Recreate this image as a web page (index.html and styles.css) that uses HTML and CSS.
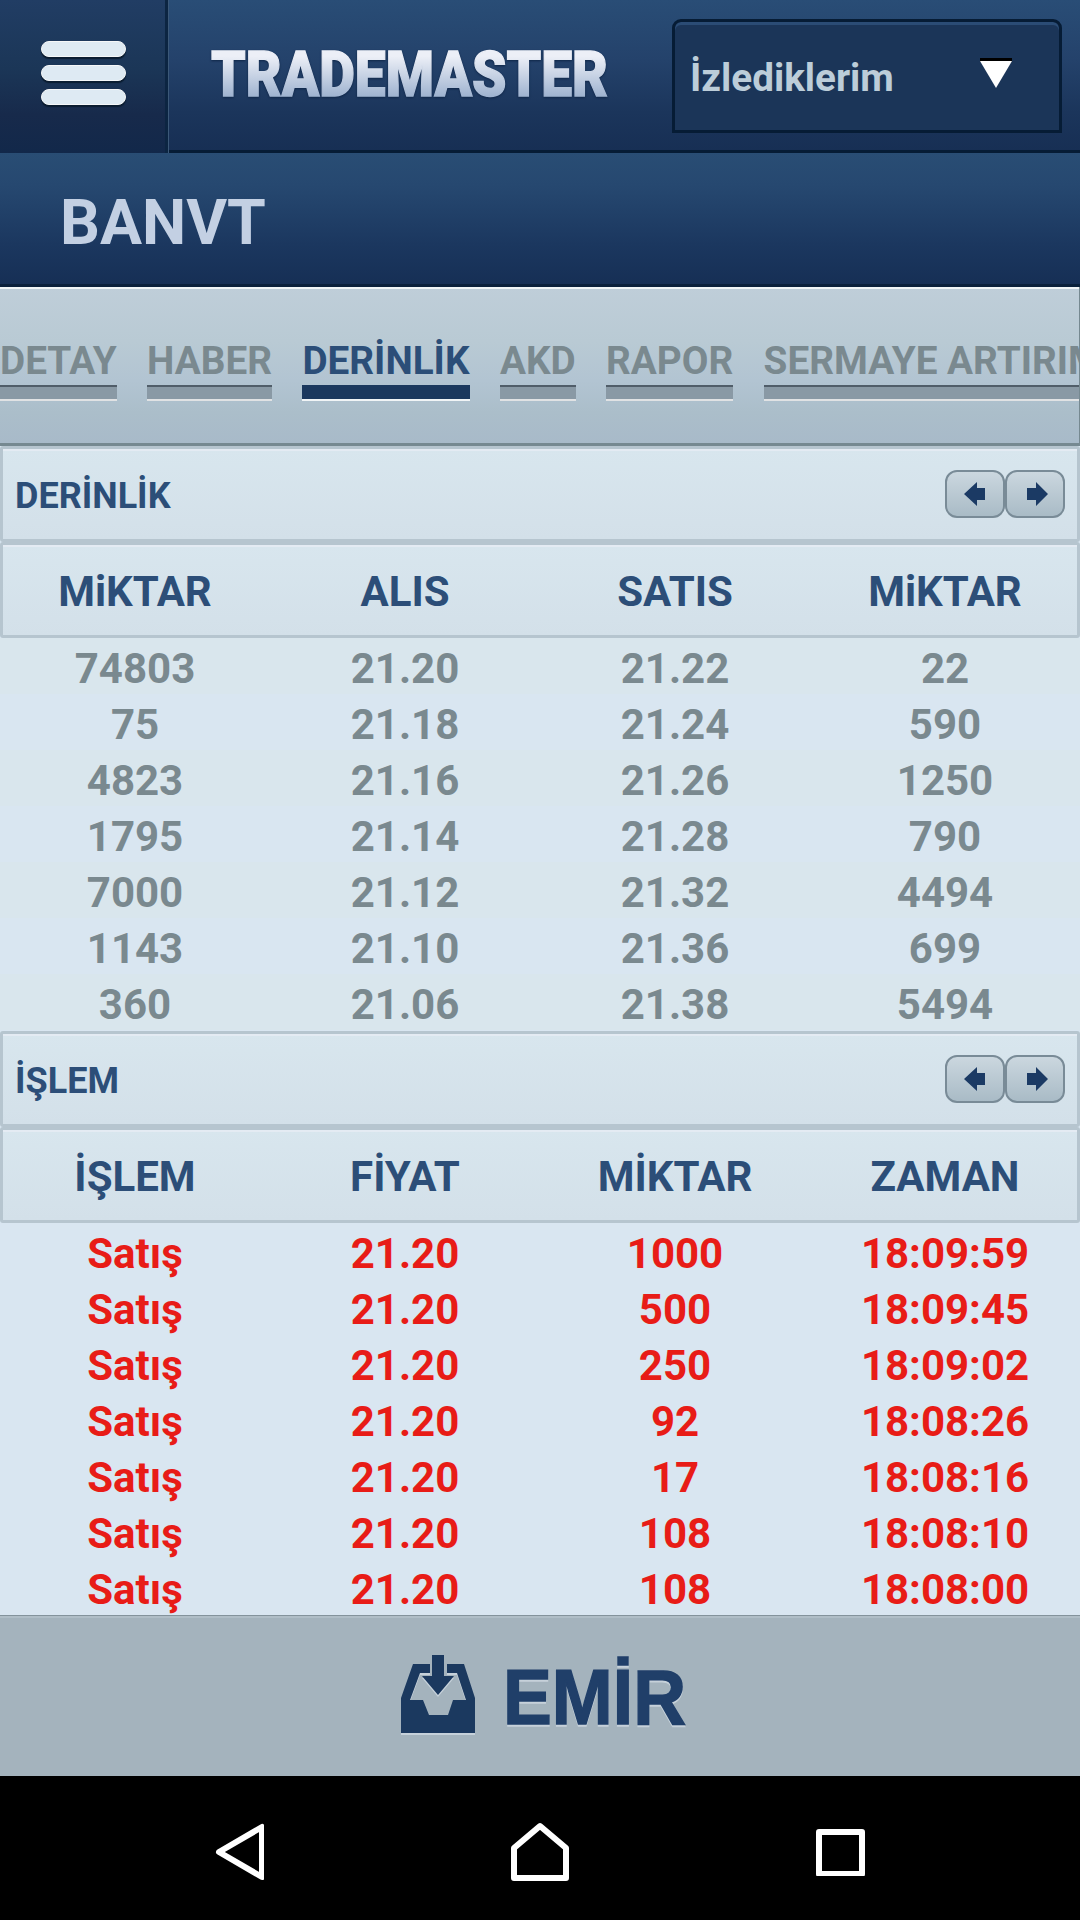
FILE: index.html
```html
<!DOCTYPE html>
<html lang="tr">
<head>
    <meta charset="UTF-8">
    <meta name="viewport" content="width=device-width, initial-scale=1.0">
    <title>TradeMaster - BANVT</title>
    <link rel="stylesheet" href="styles.css">
</head>
<body>

<header class="header">
    <button class="menu-button">
        <span class="bar"></span>
        <span class="bar"></span>
        <span class="bar"></span>
    </button>
    <svg class="brand" width="410" height="80" viewBox="0 0 410 80">
        <defs>
            <linearGradient id="brand-fill" x1="0" y1="0" x2="0" y2="1">
                <stop offset="0.25" stop-color="#eceff7"/>
                <stop offset="0.8" stop-color="#9fb3d0"/>
            </linearGradient>
        </defs>
        <text x="4" y="64" textLength="397" lengthAdjust="spacingAndGlyphs" fill="url(#brand-fill)" stroke="url(#brand-fill)">TRADEMASTER</text>
    </svg>
    <div class="list-select">
        <span>İzlediklerim</span>
        <svg width="32" height="30" viewBox="0 0 32 30">
            <rect width="32" height="4" fill="#000"/>
            <path d="M0 3h32L16 30z" fill="#fff"/>
        </svg>
    </div>
</header>

<div class="symbol-bar">
    <h1>BANVT</h1>
</div>

<nav class="tabs">
    <a class="tab">DETAY</a>
    <a class="tab">HABER</a>
    <a class="tab active">DERİNLİK</a>
    <a class="tab">AKD</a>
    <a class="tab">RAPOR</a>
    <a class="tab">SERMAYE ARTIRIM</a>
</nav>

<main class="content">
    <section>
        <div class="panel panel-title">
            <h2>DERİNLİK</h2>
            <div class="arrows">
                <button class="arrow"><svg width="22" height="24" viewBox="0 0 22 24"><path d="M0 12L13 0v6h8v12h-8v6z"/></svg></button>
                <button class="arrow next"><svg width="22" height="24" viewBox="0 0 22 24"><path d="M22 12L10 0v6H1v12h9v6z"/></svg></button>
            </div>
        </div>
        <div class="panel columns">
            <span>MiKTAR</span><span>ALIS</span><span>SATIS</span><span>MiKTAR</span>
        </div>
        <div class="rows depth">
            <div class="row"><span>74803</span><span>21.20</span><span>21.22</span><span>22</span></div>
            <div class="row"><span>75</span><span>21.18</span><span>21.24</span><span>590</span></div>
            <div class="row"><span>4823</span><span>21.16</span><span>21.26</span><span>1250</span></div>
            <div class="row"><span>1795</span><span>21.14</span><span>21.28</span><span>790</span></div>
            <div class="row"><span>7000</span><span>21.12</span><span>21.32</span><span>4494</span></div>
            <div class="row"><span>1143</span><span>21.10</span><span>21.36</span><span>699</span></div>
            <div class="row"><span>360</span><span>21.06</span><span>21.38</span><span>5494</span></div>
        </div>
    </section>

    <section>
        <div class="panel panel-title">
            <h2>İŞLEM</h2>
            <div class="arrows">
                <button class="arrow"><svg width="22" height="24" viewBox="0 0 22 24"><path d="M0 12L13 0v6h8v12h-8v6z"/></svg></button>
                <button class="arrow next"><svg width="22" height="24" viewBox="0 0 22 24"><path d="M22 12L10 0v6H1v12h9v6z"/></svg></button>
            </div>
        </div>
        <div class="panel columns">
            <span>İŞLEM</span><span>FİYAT</span><span>MİKTAR</span><span>ZAMAN</span>
        </div>
        <div class="rows trades">
            <div class="row"><span>Satış</span><span>21.20</span><span>1000</span><span>18:09:59</span></div>
            <div class="row"><span>Satış</span><span>21.20</span><span>500</span><span>18:09:45</span></div>
            <div class="row"><span>Satış</span><span>21.20</span><span>250</span><span>18:09:02</span></div>
            <div class="row"><span>Satış</span><span>21.20</span><span>92</span><span>18:08:26</span></div>
            <div class="row"><span>Satış</span><span>21.20</span><span>17</span><span>18:08:16</span></div>
            <div class="row"><span>Satış</span><span>21.20</span><span>108</span><span>18:08:10</span></div>
            <div class="row"><span>Satış</span><span>21.20</span><span>108</span><span>18:08:00</span></div>
        </div>
    </section>
</main>

<footer class="order-bar">
    <svg class="order-icon" width="74" height="78" viewBox="0 0 74 78">
        <path fill-rule="evenodd" d="M12 9h17v9H19L9 45h13l6 15h19l5-15h13L56 18H46V9h17l11 34v35H0V43z"/>
        <path d="M31 0h12v21h10L37 40 21 21h10z"/>
    </svg>
    <svg class="order-label" width="184" height="84" viewBox="0 0 184 84">
        <text x="0" y="70" textLength="183" lengthAdjust="spacingAndGlyphs">EMİR</text>
    </svg>
</footer>

<div class="system-nav">
    <svg width="50" height="58" viewBox="0 0 50 58"><path d="M48 4v50L5 29z"/></svg>
    <svg width="58" height="60" viewBox="0 0 58 60"><path d="M3 26L29 4l26 22v30H3z"/></svg>
    <svg width="50" height="48" viewBox="0 0 50 48"><path d="M3 4h43v42H3z"/></svg>
</div>

</body>
</html>
```

FILE: styles.css
```css
* {
    box-sizing: border-box;
}

body {
    margin: 0;
    width: 1080px;
    height: 1920px;
    overflow: hidden;
    display: flex;
    flex-direction: column;
    font-family: Roboto, sans-serif;
    font-weight: bold;
    background-color: #d9e6f1;
}

h1, h2 {
    margin: 0;
}

button {
    border: none;
    padding: 0;
}

/* Top bar */
.header {
    height: 153px;
    display: flex;
    align-items: flex-start;
    background: linear-gradient(#294d76, #24426b 40%, #1b355b 75%, #172f54);
    border-bottom: 3px solid #061c35;
}

.menu-button {
    width: 169px;
    height: 153px;
    padding: 41px 43px 0 41px;
    display: flex;
    flex-direction: column;
    gap: 8px;
    background: linear-gradient(#213d64, #1b3657 45%, #172a4b 75%, #12284a);
    border-right: 1px solid #3b5878;
    box-shadow: inset -3px 0 #0c2542;
}

.bar {
    width: 85px;
    height: 16px;
    border-radius: 8px;
    background-color: #deeaf3;
    border: 1px solid #f5f7f8;
    box-shadow: 0 2px 1px #0a1c30;
}

.brand {
    margin: 32px 0 0 38px;
    overflow: visible;
}

.brand text {
    font-weight: 900;
    font-size: 63px;
    stroke-width: 1.4px;
    filter: drop-shadow(0 1px 1px #0e2547);
}

.list-select {
    width: 390px;
    height: 114px;
    margin: 19px 18px 0 auto;
    padding: 0 47px 0 15px;
    display: flex;
    align-items: center;
    justify-content: space-between;
    color: #bccdd9;
    font-size: 38.7px;
    background-color: #1b3558;
    border: 3px solid #061c35;
    border-radius: 9px 9px 0 0;
    box-shadow: inset 0 3px #2b4c75;
}

.list-select span {
    padding-top: 2px;
}

.list-select svg {
    margin-bottom: 6px;
}

.symbol-bar {
    height: 134px;
    padding: 33px 0 0 60px;
    background: linear-gradient(#294d74, #264870 25%, #1b375f 70%, #162f55);
    border-bottom: 3px solid #0a203b;
}

.symbol-bar h1 {
    color: #c3d0e3;
    font-size: 62.6px;
    line-height: 74px;
}

/* Tabs */
.tabs {
    height: 159px;
    padding-top: 51px;
    display: flex;
    align-items: flex-start;
    gap: 30.4px;
    overflow: hidden;
    background: linear-gradient(#bfced9, #b9cad4 35%, #b2c4d2 60%, #abbeca 80%, #a8bac9);
    border-bottom: 3px solid #768991;
    border-right: 1px solid #768991;
    box-shadow: inset 0 2px #f0f4f6;
}

.tab {
    flex: none;
    color: #7a898f;
    font-size: 38.7px;
    line-height: 45px;
    white-space: nowrap;
}

.tab::after {
    content: "";
    display: block;
    height: 12px;
    margin-top: 2px;
    background-color: #8999a5;
    border-top: 2px solid #505d69;
    border-bottom: 2px solid #e0e2e4;
}

.tab.active {
    color: #2c4e78;
}

.tab.active::after {
    background-color: #1b385e;
    border-top-color: #1b385e;
    border-bottom-color: #f0f4f6;
}

/* Depth and trades tables */
.content {
    height: 1169px;
    overflow: hidden;
}

.content section {
    height: 585px;
}

.panel {
    height: 96px;
    color: #2c4e78;
    background: linear-gradient(#d8e6ee, #d3e0e9);
    border: 3px solid #b6c5cf;
    border-radius: 3px;
    box-shadow: inset 0 2px #e4ebf3;
}

.panel-title {
    padding: 0 12px;
    display: flex;
    align-items: center;
    justify-content: space-between;
}

.panel-title h2 {
    font-size: 36px;
    line-height: 42px;
    padding-top: 3px;
}

.arrows {
    display: flex;
}

.arrow {
    width: 60px;
    height: 48px;
    display: flex;
    align-items: center;
    justify-content: center;
    background: linear-gradient(#cbd7df, #a9bbc6);
    border: 2px solid #798b97;
    border-radius: 12px;
}

.arrow.next {
    padding-left: 3px;
}

.arrow path {
    fill: #1b3a64;
}

.columns, .row {
    display: grid;
    grid-template-columns: repeat(4, 270px);
    justify-content: center;
    text-align: center;
    font-size: 42px;
}

.columns {
    line-height: 93px;
}

.row {
    height: 56px;
    line-height: 62px;
}

.depth {
    color: #7a898f;
}

.depth .row:nth-child(odd) {
    background-color: #d9e6ed;
}

.trades {
    color: #e81c17;
}

/* Order button */
.order-bar {
    height: 161px;
    display: flex;
    justify-content: center;
    align-items: flex-start;
    gap: 28px;
    padding: 38px 0 0 8px;
    background-color: #a4b3bd;
    border-top: 1px solid #84939c;
    box-shadow: inset 0 2px #b0bec7;
}

.order-icon, .order-label {
    filter: drop-shadow(0 2px 0 #c6d1da);
    overflow: visible;
}

.order-icon {
    fill: #1b395f;
    margin-top: 1px;
}

.order-label text {
    font-family: "Liberation Sans", Arial, sans-serif;
    font-size: 78px;
    fill: #203f69;
    stroke: #203f69;
    stroke-width: 1.5px;
}

/* Android navigation */
.system-nav {
    height: 144px;
    padding: 7px 214px 0;
    display: flex;
    align-items: center;
    justify-content: space-between;
    background-color: #000;
}

.system-nav svg {
    fill: none;
    stroke: #fff;
    stroke-width: 6;
    stroke-linejoin: round;
}
```
